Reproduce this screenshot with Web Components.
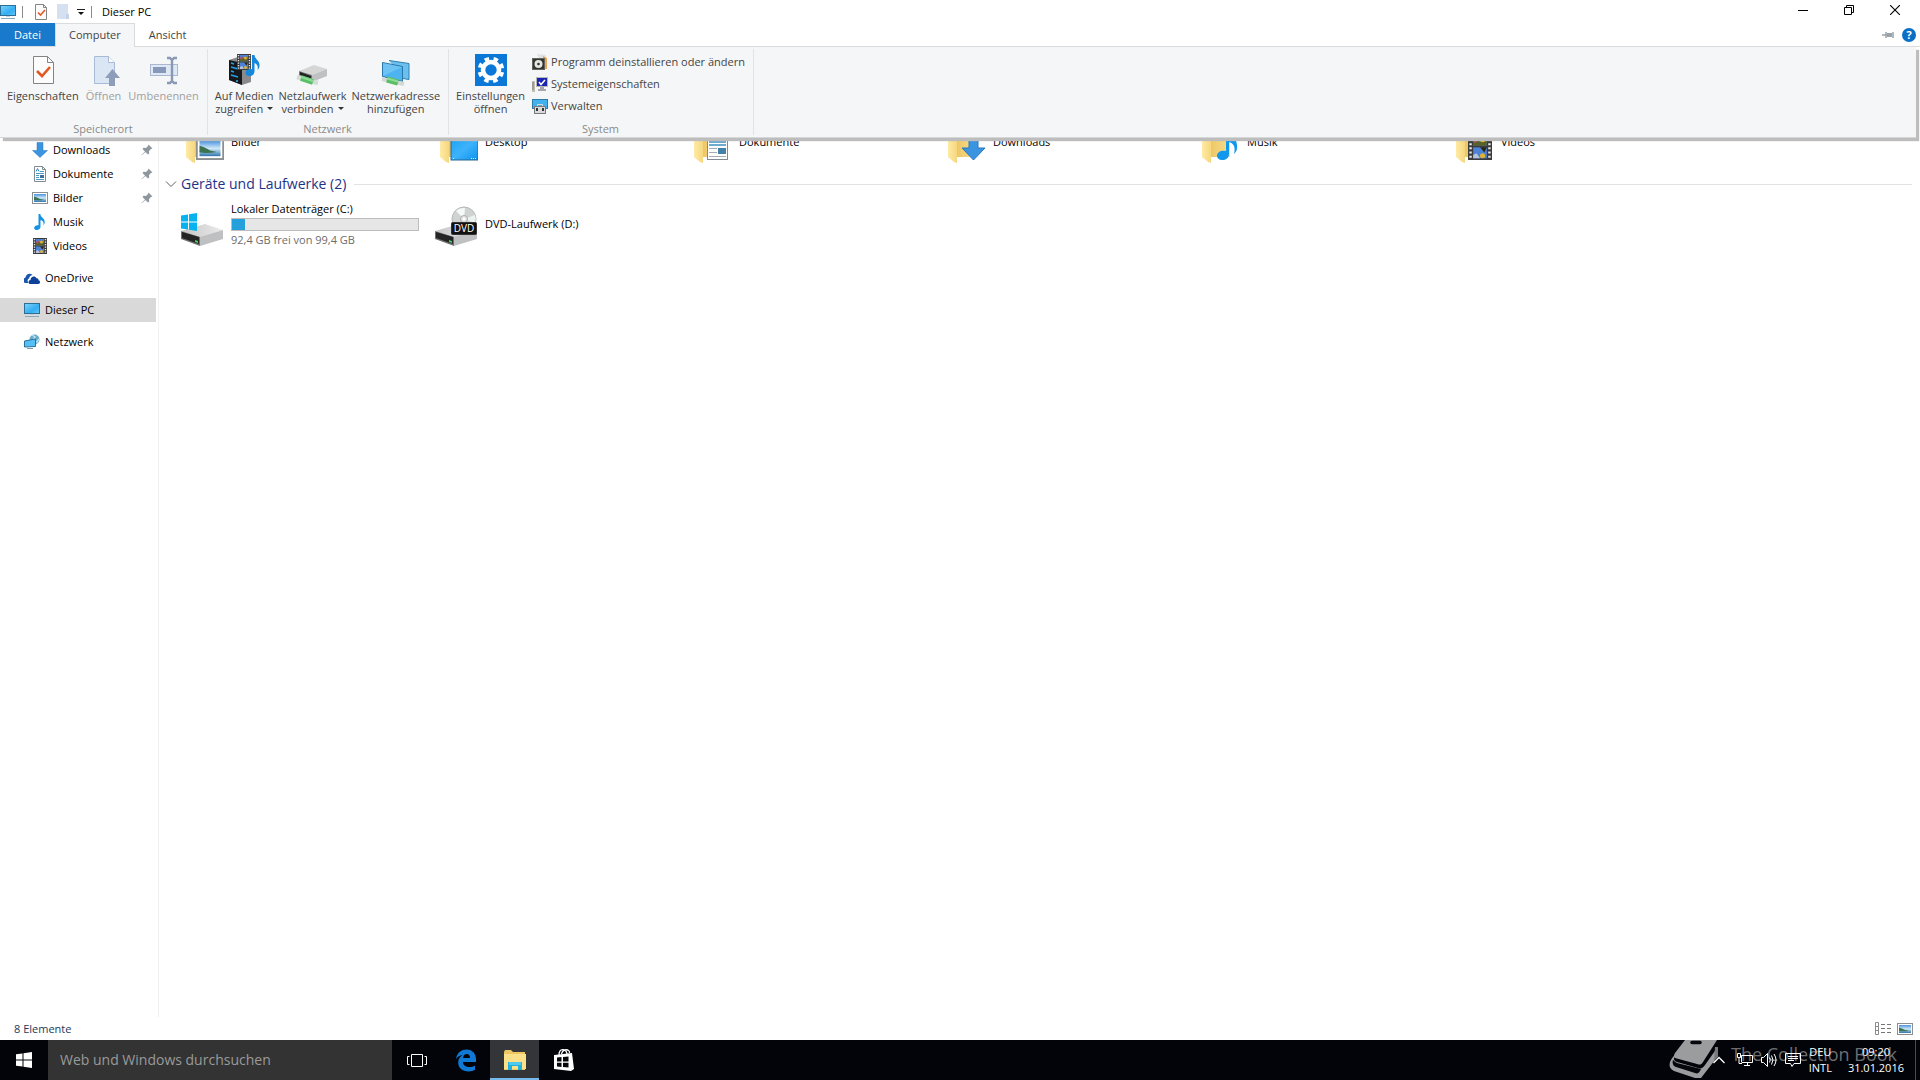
<!DOCTYPE html>
<html lang="de">
<head>
<meta charset="utf-8">
<title>Dieser PC</title>
<style>
    html, body {
        margin: 0;
        height: 100%;
    }
    body {
        font: 11px/16px "Open Sans", "Noto Sans", sans-serif;
        color: #000;
        background: #fff;
        overflow: hidden;
    }
</style>
</head>
<body>
<desktop-shell></desktop-shell>

<script>
// ---- icon artwork -------------------------------------------------------
// Small parts (16x16 units) that are drawn alone or placed on a folder.
const parts = {
    monitor: `
        <linearGradient id="scr" x1="0" y1="0" x2="1" y2="1"><stop offset="0" stop-color="#7fd4fb"/><stop offset=".6" stop-color="#35aef2"/><stop offset="1" stop-color="#63c6fa"/></linearGradient>
        <rect x=".5" y="1.5" width="15" height="10" fill="url(#scr)" stroke="#2b6f97"/>
        <path d="M1 14.5h14" stroke="#8ea9bb"/><path d="M6 12.5h4" stroke="#c3d4df"/>`,
    picture: `
        <linearGradient id="sky" x1="0" y1="0" x2="0" y2="1"><stop offset="0" stop-color="#4c93de"/><stop offset=".5" stop-color="#cfe8f8"/><stop offset="1" stop-color="#2f74ad"/></linearGradient>
        <rect x=".5" y="2.5" width="15" height="11" fill="#fff" stroke="#8c8f92"/>
        <rect x="2" y="4" width="12" height="8" fill="url(#sky)"/>
        <path d="M2 6.500q4 1 6 2.500l4 .8q-6 .9-10 .2z" fill="#3b7350"/>`,
    music: `<path d="M6.500 0h1.800c.3 3.500 4.700 4.200 4.400 8.200-.1 1.400-.6 2.300-1.300 3.200.7-3.200-.5-4.600-2.900-5.400v6.700c0 1.900-1.600 3.300-3.600 3.300-1.600 0-2.700-.8-2.700-2.100 0-1.800 1.900-3.100 4.300-2.700z" fill="#1493e6"/>`,
    film: `
        <rect x="1" width="14" height="16" fill="#3b3b3b"/>
        <path d="M2.500 1v15M13.500 1v15" stroke="#e9e9e9" stroke-width="1.400" stroke-dasharray="1.200 1.300"/>
        <rect x="4" y="1" width="8" height="6.500" fill="#4c82d8"/><rect x="4" y="8.500" width="8" height="6.500" fill="#4c82d8"/>
        <path d="M4 5l2-2 2 2 2-3 2 3v2.500H4z" fill="#59602a"/><path d="M4 4l2-2 1 2-2 2z" fill="#b74b6b"/>
        <circle cx="9.500" cy="4" r="1.500" fill="#e3b32a"/><path d="M8 8.500h4l-1.500 3z" fill="#2f2414"/>
        <circle cx="9.500" cy="13.500" r="1.500" fill="#e3b32a"/><path d="M4 13l2-1 2 3H4z" fill="#b6c4dd"/>`,
    download: `<path d="M5 .5h6v8h4.500L8 15.500.5 8.500H5z" fill="#3b94e0" stroke="#2a77bd" stroke-width=".5"/>`,
    document: `
        <path d="M2.500.5h8l3 3v12h-11z" fill="#fff" stroke="#7f8a92"/><path d="M10.500.5v3h3" fill="none" stroke="#7f8a92"/>
        <path d="M4 5.500l1.500-3 1.500 3" fill="none" stroke="#2c8bc9"/><path d="M8 5.500h4M4 7.500h8M4 9.500h3M4 11.500h3M4 13.500h8" stroke="#4b9dc8"/>
        <rect x="8" y="9" width="4" height="3" fill="#38729d"/>`
};

const folder = art => `
    <linearGradient id="fb"><stop offset="0" stop-color="#edc663"/><stop offset="1" stop-color="#f9df8f"/></linearGradient>
    <linearGradient id="ff"><stop offset="0" stop-color="#ffeaa5"/><stop offset="1" stop-color="#f6d77e"/></linearGradient>
    <path d="M18 10h20v29H18z" fill="url(#fb)"/><path d="M10 8l9 4v33l-3-1-6-5z" fill="url(#ff)"/>${art}`;

const place = (part, x, y, w, h, box) =>
    `<svg x="${x}" y="${y}" width="${w}" height="${h}" viewBox="${box}" preserveAspectRatio="none">${parts[part]}</svg>`;

const drive = `
    <linearGradient id="dt" x1="0" x2="1"><stop offset="0" stop-color="#c4c4c4"/><stop offset="1" stop-color="#ececec"/></linearGradient>
    <path d="M5 31l24-7 18 6-23 8z" fill="url(#dt)"/>
    <path d="M24 37l23-7v9L24 46z" fill="#bfc0c1"/>
    <path d="M5 31l19 6v9L5 39z" fill="#707070"/><path d="M6 32l17 5v7L6 38z" fill="#242424"/>
    <path d="M19 40l3 1v2l-3-1z" fill="#44d05d"/>`;

const icons = {
    monitor: [16, parts.monitor],
    picture: [16, parts.picture],
    music: [16, parts.music],
    film: [16, parts.film],
    download: [16, parts.download],
    document: [16, parts.document],
    check: [16, `<path d="M2.500.5h8l3 3v12h-11z" fill="#fbfbfb" stroke="#858585"/><path d="M10.500.5v3h3" fill="none" stroke="#858585"/><path d="M5 8.500l2.500 2.500 4.500-5" fill="none" stroke="#e4572a" stroke-width="1.600"/>`],
    blank: [16, `<path d="M2 0h11v15H2z" fill="#d5e0f1"/><path d="M11 10h3v5h-3z" fill="#c5d2e8"/>`],
    qatArrow: [8, `<path d="M0 1.500h8" stroke="#222"/><path d="M1 4h6L4 7z" fill="#111"/>`],
    onedrive: [16, `<path d="M1 13a3 3 0 0 1 .5-5.500C2 4 6 2.500 8.500 5 6 5.500 5.500 7 5.200 8.300 3.500 9 3 11.500 4.500 13z" fill="#1a56ad"/><path d="M6.500 14C3.800 14 4 10.300 6.500 10 6.500 6.500 11 5.200 12.500 8.300c1.500-.2 2 .8 2 2 2.200.4 1.900 3.700-.3 3.700z" fill="#0c419a"/>`],
    network: [16, `<circle cx="10.500" cy="5.500" r="5" fill="#6aa8c9"/><path d="M8 1l3 2-2 3 4 2 2-3" fill="none" stroke="#b9e2ef" stroke-width="1.500"/><path d="M.5 7l11-2v7.500l-11 .5z" fill="#55c0f5" stroke="#2a719a"/><path d="M3 14.500h6" stroke="#7d99aa"/>`],
    pin: [12, `<path d="M7.500.5l4 4-1.500.5-2 2 .2 2.500-1.200 1L4.500 8 .8 11.300.5 11 4 7.500 1.500 5l1-1.200L5 4l2-2z" fill="#8f979e"/>`],
    pinSide: [12, `<path d="M0 6h4M4 3v6M4 6h6M11 3v6" stroke="#99a3ab" stroke-width="1.500"/><path d="M5 4h5v4H5z" fill="#99a3ab"/>`],
    help: [14, `<circle cx="7" cy="7" r="7" fill="#0b6fc6"/><text x="7" y="11" font-size="11" font-weight="700" text-anchor="middle" fill="#fff">?</text>`],
    minimize: [10, `<path d="M0 5.500h10" stroke="#000"/>`],
    restore: [10, `<path d="M.5 2.500h7v7h-7zM2.500 2.500v-2h7v7h-2" fill="none" stroke="#000"/>`],
    close: [10, `<path d="M0 0l10 10M10 0L0 10" stroke="#000" stroke-width="1.100"/>`],
    chevron: [12, `<path d="M1 3.500l5 5 5-5" fill="none" stroke="#616161"/>`],

    properties: [32, `<path d="M6.500 2.500h14l6 6v21h-20z" fill="#fcfcfc" stroke="#838383"/><path d="M20.500 2.500v6h6" fill="none" stroke="#838383"/><path d="M10 17l5 5 8-9" fill="none" stroke="#e25822" stroke-width="2.600"/>`],
    open: [32, `<path d="M6.500 2.500h14l6 6v21h-20z" fill="#dbe6f5" stroke="#a9bad6"/><path d="M20.500 2.500v6h6" fill="#fff" stroke="#a9bad6"/><path d="M24.500 15l7.500 9h-5v8h-6v-8h-4z" fill="#8d9dba"/>`],
    rename: [32, `<rect x="2.500" y="10.500" width="27" height="11" fill="#dfe8f5" stroke="#aab8d1"/><rect x="5" y="13" width="13" height="6" fill="#8798b8"/><path d="M19 4h3l2 2 2-2h3M24 6v21M19 29h3l2-2 2 2h3" fill="none" stroke="#8998b3" stroke-width="2.400"/>`],
    media: [32, `<path d="M1 6l9-3 13 4v21l-9 3-13-5z" fill="#8b8b8d"/><path d="M1 6l13 3v22L1 26z" fill="#17181b"/><path d="M3 9l3 1M3 13l7 2M3 17l3 1M3 21l7 2M9 13l2 1" stroke="#22a2ea" stroke-width="1.500"/><circle cx="9" cy="27" r="1" fill="#3ab4f5"/>${place("film", 8, 0, 16, 16, "0 0 16 16")}<path d="M24 1h2.500c.5 5 5.500 5 5 11-.2 2-1 3-2 4 1-4-.5-6-3-7v8c0 3-2 5-5 5-2.500 0-4-1.200-4-3 0-2.600 3-4.500 6.500-3.700z" fill="#1688db"/>`],
    netdrive: [32, `<path d="M3 17L18 11l13 4-15 6z" fill="#d6d6d6"/><path d="M16 21l15-6v7l-15 6z" fill="#bfc0c1"/><path d="M3 17l13 4v6L3 23z" fill="#77797a"/><path d="M4 18l11 4v3L4 21z" fill="#222"/><path d="M1 23l21 6" stroke="#d6dcd7" stroke-width="4.500"/><path d="M5 24l12 4" stroke="#59be67" stroke-width="6"/><path d="M5 23l12 4" stroke="#8ddc95" stroke-width="2"/>`],
    netaddress: [32, `<path d="M9 6.500l20 3v16l-6-1" fill="#6cc0ef" stroke="#2e7fae"/><path d="M2.500 8.500l20 4v15l-20-5z" fill="#4db3f1" stroke="#2a76a4"/><path d="M3 22V9l19 4z" fill="#84cef7" opacity=".6"/><path d="M2 25l22 5" stroke="#d2d8d3" stroke-width="4"/><path d="M7 25.500l11 3" stroke="#59be67" stroke-width="6"/><path d="M7 24.500l11 3" stroke="#8ddc95" stroke-width="2"/>`],
    settings: [32, `<rect width="32" height="32" fill="#0b78d7"/><circle cx="16" cy="16" r="8" fill="none" stroke="#fff" stroke-width="4.600"/><circle cx="16" cy="16" r="11.300" fill="none" stroke="#fff" stroke-width="4" stroke-dasharray="4.440 4.440" transform="rotate(11 16 16)"/>`],
    uninstall: [16, `<path d="M5 0l9 1v11l-5-1z" fill="#dfe3e6"/><path d="M11 2l4 2v11h-4z" fill="#e8a659"/><rect x=".5" y="4.500" width="12" height="11" fill="#33352f" stroke="#62645d"/><circle cx="6.500" cy="10" r="4" fill="#e6e6e6"/><circle cx="6.500" cy="10" r="1.300" fill="#30322d"/>`],
    system: [16, `<path d="M0 5h3v11H0z" fill="#c1c0b4"/><path d="M1 6v8" stroke="#7d7c70"/><rect x="4.500" y="1.500" width="11" height="9" fill="#1b25b0" stroke="#b7b7b9"/><path d="M7 6l2 2.500L13 4" fill="none" stroke="#fff" stroke-width="1.500"/><path d="M8 11h4v2h2v2H6v-2h2z" fill="#a6a6aa"/>`],
    manage: [16, `<rect x=".5" y="1.500" width="15" height="9" fill="#42b2ee" stroke="#2b7aa8"/><path d="M5.500 8V6.500h5V8" fill="none" stroke="#d8d8d8"/><rect x="2.500" y="8.500" width="11" height="7" fill="#d9dadb" stroke="#77797b"/><path d="M5 10v3M11 10v3" stroke="#333" stroke-width="2"/>`],

    folderPictures: [48, folder(place("picture", 20, 19, 28, 23, "0 2 16 12"))],
    folderDesktop: [48, folder(`<linearGradient id="dk" x1="0" y1="0" x2="1" y2="1"><stop offset="0" stop-color="#1aa3f6"/><stop offset=".5" stop-color="#3eb2fa"/><stop offset="1" stop-color="#0b93ee"/></linearGradient><rect x="21" y="20" width="27" height="22" fill="url(#dk)" stroke="#26668f"/><path d="M23 40.500h1M41 40.500h5" stroke="#d9f0ff" stroke-dasharray="1 1"/>`)],
    folderDocuments: [48, folder(`<rect x="23.500" y="14.500" width="20" height="27" fill="#fff" stroke="#7f8a92"/><path d="M25 24h17M25 27h17" stroke="#3f91bf" stroke-width="1.400"/><path d="M25 30.500h8M25 34.500h8M25 38.500h17" stroke="#a5adb3"/><rect x="34" y="30" width="8" height="6" fill="#4381a9"/>`)],
    folderDownloads: [48, folder(`<path d="M31 12h9v18h7L35.500 42 24 30h7z" fill="#3b94e0" stroke="#2a77bd"/>`)],
    folderMusic: [48, folder(`<path d="M34 12h3c1 6 9 8 8 18 0 2-1 4-3 6 2-8-1-11-5-12v12c0 4-3 6-7 6-3 0-5-2-5-4 0-4 4-6 9-5z" fill="#1197ec"/>`)],
    folderVideos: [48, folder(place("film", 22, 15, 24, 27, "1 0 14 16"))],
    driveC: [48, drive + `<path d="M5 15.500l7-1v7H5zM13 14.300l8-1.300v8.500h-8zM5 22.500h7v7l-7-1zM13 22.500h8V31l-8-1.300z" fill="#06b3ee"/>`],
    driveDvd: [48, drive + `<circle cx="34" cy="19" r="12" fill="#cfd4d3" stroke="#b4b9b8"/><path d="M34 19l-8-8a11 11 0 0 1 9-3z" fill="#f5f9f7"/><path d="M34 19l11 4a12 12 0 0 0 0-8z" fill="#eaf3ee"/><circle cx="34" cy="19" r="3.500" fill="#e8e8e8" stroke="#aaa"/><circle cx="34" cy="19" r="1.200" fill="#fff"/><rect x="21.500" y="22.500" width="25" height="12" rx="1" fill="#111" stroke="#333"/><text x="34" y="32" font-size="10" text-anchor="middle" fill="#fff">DVD</text>`],

    viewDetails: [16, `<path d="M.5 1.500h3v12h-3zM.5 5.500h3M.5 9.500h3" fill="none" stroke="#8b8b8b"/><path d="M6 3.500h4M6 7.500h4M6 11.500h4M12 3.500h4M12 7.500h4M12 11.500h4" stroke="#757575"/>`],
    start: [16, `<path d="M0 2.300L6.500 1.400V7.500H0zM7.500 1.200L16 0v7.500H7.500zM0 8.500h6.500v6.100L0 13.700zM7.500 8.500H16V16l-8.500-1.200z" fill="#fff"/>`],
    taskview: [20, `<path d="M4.500 4.500h11v12h-11zM2.500 6.500h-2v8h2M17.500 6.500h2v8h-2" fill="none" stroke="#fff"/>`],
    edge: [24, `<path d="M2 11C3 4.500 7.500 1.500 12.500 1.500c6 0 9.500 4.500 9.500 9.500v3H9c0 3.500 3 5 6.300 5 2.200 0 4.200-.6 5.700-1.600v4.400c-1.700 1-4 1.700-6.700 1.700C8.500 23.500 4.200 20 4.200 14.500 4.200 11 6 8.500 8.700 7 5.500 7.500 3.300 9 2 11zm7-1h7c0-2.700-1.200-4-3.300-4C10.700 6 9.400 7.500 9 10z" fill="#0f79d4"/>`],
    explorer: [24, `<path d="M1 4l1-2h6l2 2h12v18H1z" fill="#edc75f"/><path d="M1 6h22v15H1z" fill="#fbe08a"/><path d="M5 22v-8h14v8h-4v-4H9v4z" fill="#24b0de"/><path d="M6 14h12v3H6z" fill="#4ecbec"/>`],
    store: [24, `<path d="M7 7C7 0 14 0 15 6M9.500 6C11 0 18 1 17.500 5" fill="none" stroke="#fff" stroke-width="1.300"/><path d="M2 7l18-2 2 16-3 2-17-2z" fill="#fff"/><path d="M5 9.500l4.500-.4v4.300H5zM11 9l5.500-.6v5H11zM5 14.700h4.500v4.200L5 18.500zM11 14.700h5.500v4.900L11 19z" fill="#05070c"/>`],
    trayUp: [12, `<path d="M.5 9L6 3.500 11.500 9" fill="none" stroke="#fff" stroke-width="1.300"/>`],
    trayNet: [16, `<path d="M4.500 3.500h11v7h-11zM10.500 10.500v3M7 13.500h6" fill="none" stroke="#fff"/><path d="M.5 1.500h3v4h-3zM2 6v5.500h3" fill="#05070c" stroke="#fff"/>`],
    trayVolume: [16, `<path d="M.5 5.500h2l4-4v13l-4-4h-2z" fill="none" stroke="#fff"/><path d="M8.500 5.500q1.500 2.500 0 5M10.500 3.500q3 4.500 0 9M13 2q4 6 0 12" fill="none" stroke="#fff"/>`],
    trayAction: [16, `<path d="M.5 1.500h15v10H9L7 14.500 5.500 11.500h-5zM3 4.500h10M3 6.500h10M3 8.500h6" fill="none" stroke="#fff"/>`],
    book: [52, `<path d="M16 0h32L34 22c-2 3-3 3-6 2L6 18c-2-1-1-3 0-5z" fill="#9b9c9e"/><path d="M23 2.500h8" stroke="#05070c" stroke-width="3.500" stroke-linecap="round"/><path d="M6 15c-2 4-1 6 2 7l21 6c3 1 5 0 7-3L48 8l-2 12-14 18H26L5 31C-2 28 0 20 6 15z" fill="#9b9c9e"/><path d="M4 20c-1 3 0 6 3 7l19 6c2 1 4 0 5-2l1-2-24-6c-2-1-3-2-4-3z" fill="#05070c"/><path d="M46 7h3v10l-4 4z" fill="#77787a"/>`]
};

// Base class: gives every element an open shadow root filled from a template.
class ShellElement extends HTMLElement {
    constructor() {
        super();
        this.attachShadow({ mode: 'open' });
        const template = document.createElement('template');
        template.innerHTML = this.render();
        this.shadowRoot.appendChild(template.content.cloneNode(true));
    }
}

class ShellIcon extends HTMLElement {
    static observedAttributes = ['name'];

    constructor() {
        super();
        this.attachShadow({ mode: 'open' });
    }

    attributeChangedCallback(attribute, oldName, name) {
        const [size, art] = icons[name];
        this.shadowRoot.innerHTML = `
            <style>
                :host { display: block; flex: none; width: ${size}px; height: ${size}px; }
                .icon { display: block; width: 100%; height: 100%; }
            </style>
            <svg class="icon" viewBox="0 0 ${size} ${size}" aria-hidden="true">${art}</svg>`;
    }
}

class TitleBar extends ShellElement {
    render() {
        return `
            <style>
                :host { display: flex; align-items: flex-start; height: 23px; padding-right: 2px; }
                button { border: 0; background: none; padding: 0; color: inherit; }
                .quick { display: flex; align-items: center; flex: 1; gap: 6px; height: 23px; }
                .line { width: 1px; height: 12px; margin-right: 4px; background: #8b8b8b; }
                .window { width: 46px; height: 20px; display: grid; place-items: center; }
                h1 { font: inherit; margin: 0; }
            </style>
            <div class="quick">
                <shell-icon name="monitor"></shell-icon>
                <span class="line"></span>
                <button aria-label="Eigenschaften"><shell-icon name="check"></shell-icon></button>
                <button aria-label="Neuer Ordner"><shell-icon name="blank"></shell-icon></button>
                <button aria-label="Symbolleiste anpassen"><shell-icon name="qatArrow"></shell-icon></button>
                <span class="line"></span>
                <h1>Dieser PC</h1>
            </div>
            <button class="window" aria-label="Minimieren"><shell-icon name="minimize"></shell-icon></button>
            <button class="window" aria-label="Verkleinern"><shell-icon name="restore"></shell-icon></button>
            <button class="window" aria-label="Schließen"><shell-icon name="close"></shell-icon></button>
        `;
    }
}

class RibbonTabs extends ShellElement {
    render() {
        return `
            <style>
                :host { display: flex; height: 23px; border-bottom: 1px solid #dadbdc; }
                button { font: inherit; color: #444; border: 0; background: none; padding: 0 14px; margin: 0; }
                .file { background: #1979ca; color: #fff; }
                .active { box-sizing: border-box; background: #f5f6f7; border: 1px solid #dadbdc; border-bottom: 0; height: 24px; padding: 0 13px 2px; }
                .tools { margin-left: auto; display: flex; align-items: center; gap: 8px; padding-right: 4px; }
                .tools button { padding: 0; }
            </style>
            <button class="file">Datei</button>
            <button class="active">Computer</button>
            <button>Ansicht</button>
            <div class="tools">
                <button aria-label="Menüband anheften"><shell-icon name="pinSide"></shell-icon></button>
                <button aria-label="Hilfe"><shell-icon name="help"></shell-icon></button>
            </div>
        `;
    }
}

class RibbonGroup extends ShellElement {
    render() {
        return `
            <style>
                :host { display: flex; flex-direction: column; padding: 5px 8px 0 7px; border-right: 1px solid #e2e3e4; }
                .tools { display: flex; gap: 7px; flex: 1; }
                :host([dense]) .tools { gap: 5px; }
                .name { text-align: center; color: #8a8a8a; line-height: 13px; margin-top: 7px; }
            </style>
            <div class="tools"><slot></slot></div>
            <div class="name"></div>
        `;
    }

    connectedCallback() {
        this.shadowRoot.querySelector('.name').textContent = this.getAttribute('name');
    }
}

class RibbonButton extends ShellElement {
    render() {
        return `
            <style>
                :host { display: block; }
                button { display: flex; flex-direction: column; align-items: center; gap: 3px; font: inherit; line-height: 13px; color: #444; background: none; border: 0; padding: 0; }
                .label { text-align: center; min-height: 26px; white-space: nowrap; }
                :host([disabled]) button { color: #a0a0a0; }
                :host([small]) button { flex-direction: row; align-items: flex-start; height: 16px; line-height: 15px; }
                :host([small]) .label { min-height: 0; }
                :host([menu]) .label::after { content: ""; display: inline-block; margin-left: 4px; vertical-align: 3px; border: 3px solid transparent; border-top-color: #333; border-bottom: 0; }
            </style>
            <button><shell-icon></shell-icon><span class="label"><slot></slot></span></button>
        `;
    }

    connectedCallback() {
        this.shadowRoot.querySelector('shell-icon').setAttribute('name', this.getAttribute('icon'));
        this.shadowRoot.querySelector('button').disabled = this.hasAttribute('disabled');
    }
}

class RibbonPanel extends ShellElement {
    render() {
        return `
            <style>
                :host { display: flex; box-sizing: border-box; padding: 2px 0; background: #f5f6f7; border-bottom: 1px solid #d5d6d7; box-shadow: 3px 3px 1px #bdbdbd; }
                .stack { display: flex; flex-direction: column; gap: 6px; }
            </style>
            <ribbon-group name="Speicherort">
                <ribbon-button icon="properties">Eigenschaften</ribbon-button>
                <ribbon-button icon="open" disabled>Öffnen</ribbon-button>
                <ribbon-button icon="rename" disabled>Umbenennen</ribbon-button>
            </ribbon-group>
            <ribbon-group name="Netzwerk" dense>
                <ribbon-button icon="media" menu>Auf Medien<br>zugreifen</ribbon-button>
                <ribbon-button icon="netdrive" menu>Netzlaufwerk<br>verbinden</ribbon-button>
                <ribbon-button icon="netaddress">Netzwerkadresse<br>hinzufügen</ribbon-button>
            </ribbon-group>
            <ribbon-group name="System">
                <ribbon-button icon="settings">Einstellungen<br>öffnen</ribbon-button>
                <div class="stack">
                    <ribbon-button small icon="uninstall">Programm deinstallieren oder ändern</ribbon-button>
                    <ribbon-button small icon="system">Systemeigenschaften</ribbon-button>
                    <ribbon-button small icon="manage">Verwalten</ribbon-button>
                </div>
            </ribbon-group>
        `;
    }
}

class NavPane extends ShellElement {
    render() {
        const item = (icon, label, kind = '', pinned = false) => `
            <a href="#" class="${kind}"><shell-icon name="${icon}"></shell-icon><span>${label}</span>${pinned ? '<shell-icon name="pin"></shell-icon>' : ''}</a>`;
        return `
            <style>
                :host { display: block; padding-top: 91px; padding-right: 2px; border-right: 1px solid #f0f0f0; }
                a { display: flex; align-items: center; gap: 5px; height: 24px; padding: 0 3px 0 32px; color: inherit; text-decoration: none; }
                span { flex: 1; }
                .root { padding-left: 24px; margin-top: 8px; }
                .selected { background: #d9d9d9; }
            </style>
            ${item('download', 'Downloads', '', true)}
            ${item('document', 'Dokumente', '', true)}
            ${item('picture', 'Bilder', '', true)}
            ${item('music', 'Musik')}
            ${item('film', 'Videos')}
            ${item('onedrive', 'OneDrive', 'root')}
            ${item('monitor', 'Dieser PC', 'root selected')}
            ${item('network', 'Netzwerk', 'root')}
        `;
    }
}

class FileTile extends ShellElement {
    render() {
        return `
            <style>
                :host { display: block; }
                button { display: flex; align-items: center; gap: 7px; width: 100%; height: 48px; padding: 0; border: 0; background: none; font: inherit; color: inherit; text-align: left; }
            </style>
            <button><shell-icon></shell-icon><span><slot></slot></span></button>
        `;
    }

    connectedCallback() {
        this.shadowRoot.querySelector('shell-icon').setAttribute('name', this.getAttribute('icon'));
    }
}

class FileView extends ShellElement {
    render() {
        return `
            <style>
                :host { display: block; padding: 71px 8px 0 6px; }
                .tiles { display: grid; grid-template-columns: repeat(auto-fill, 254px); padding-left: 11px; }
                header { display: flex; align-items: center; gap: 4px; margin: 8px 0 6px; }
                h2 { font-size: 14px; line-height: 20px; font-weight: 400; margin: 0; color: #1e3287; }
                hr { flex: 1; border: 0; border-top: 1px solid #e2e2e2; margin: 0 0 0 4px; }
                progress { display: block; appearance: none; box-sizing: border-box; width: 188px; height: 13px; margin: 1px 0; border: 1px solid #bcbcbc; }
                progress::-webkit-progress-bar { background: #e6e6e6; }
                progress::-webkit-progress-value { background: #26a0da; }
                small { display: block; font-size: 11px; color: #6d6d6d; }
            </style>
            <div class="tiles">
                <file-tile icon="folderPictures">Bilder</file-tile>
                <file-tile icon="folderDesktop">Desktop</file-tile>
                <file-tile icon="folderDocuments">Dokumente</file-tile>
                <file-tile icon="folderDownloads">Downloads</file-tile>
                <file-tile icon="folderMusic">Musik</file-tile>
                <file-tile icon="folderVideos">Videos</file-tile>
            </div>
            <header>
                <shell-icon name="chevron"></shell-icon>
                <h2>Geräte und Laufwerke (2)</h2>
                <hr>
            </header>
            <div class="tiles">
                <file-tile icon="driveC">Lokaler Datenträger (C:)<progress value="7" max="99" aria-label="Belegter Speicher"></progress><small>92,4 GB frei von 99,4 GB</small></file-tile>
                <file-tile icon="driveDvd">DVD-Laufwerk (D:)</file-tile>
            </div>
        `;
    }
}

class StatusBar extends ShellElement {
    render() {
        return `
            <style>
                :host { display: flex; align-items: center; gap: 6px; height: 23px; padding: 0 7px 0 14px; color: #1e395b; }
                .count { flex: 1; }
                button { border: 0; background: none; padding: 0; }
            </style>
            <span class="count">8 Elemente</span>
            <button aria-label="Details"><shell-icon name="viewDetails"></shell-icon></button>
            <button aria-label="Große Symbole"><shell-icon name="picture"></shell-icon></button>
        `;
    }
}

class ExplorerWindow extends ShellElement {
    render() {
        return `
            <style>
                :host { display: flex; flex-direction: column; }
                main { position: relative; flex: 1; display: grid; grid-template-columns: 159px 1fr; }
                /* the ribbon is minimised, so it drops down over the files */
                ribbon-panel { position: absolute; top: 0; left: 0; right: 4px; z-index: 1; }
            </style>
            <title-bar></title-bar>
            <ribbon-tabs></ribbon-tabs>
            <main>
                <ribbon-panel></ribbon-panel>
                <nav-pane></nav-pane>
                <file-view></file-view>
            </main>
            <status-bar></status-bar>
        `;
    }
}

class TaskBar extends ShellElement {
    render() {
        return `
            <style>
                :host { position: relative; display: flex; height: 40px; background: #020409; color: #fff; }
                button { border: 0; background: none; padding: 0; color: inherit; font: inherit; }
                .app { display: grid; place-items: center; width: 49px; }
                .start { width: 48px; }
                .open { background: #343538; box-shadow: inset 0 -2px #76b9ed; }
                input { width: 344px; box-sizing: border-box; border: 0; padding: 0 12px; background: #333; color: #fff; font: inherit; font-size: 14px; }
                input::placeholder { color: #9a9a9a; }
                .tray { display: flex; align-items: center; gap: 8px; margin-left: auto; position: relative; }
                .more { margin-right: 4px; }
                .clock { padding: 0 11px 0 8px; }
                .peek { border-left: 1px solid #4b4c50; width: 4px; }
                .mark { position: absolute; right: 23px; top: 0; display: flex; gap: 10px; color: #6d6e71; font-size: 18px; line-height: 28px; }
            </style>
            <button class="app start" aria-label="Start"><shell-icon name="start"></shell-icon></button>
            <input type="text" placeholder="Web und Windows durchsuchen" aria-label="Web und Windows durchsuchen">
            <button class="app" aria-label="Taskansicht"><shell-icon name="taskview"></shell-icon></button>
            <button class="app" aria-label="Microsoft Edge"><shell-icon name="edge"></shell-icon></button>
            <button class="app open" aria-label="Explorer"><shell-icon name="explorer"></shell-icon></button>
            <button class="app" aria-label="Store"><shell-icon name="store"></shell-icon></button>
            <div class="mark"><shell-icon name="book"></shell-icon><span>The Collection Book</span></div>
            <div class="tray">
                <button class="more" aria-label="Ausgeblendete Symbole"><shell-icon name="trayUp"></shell-icon></button>
                <button aria-label="Netzwerk"><shell-icon name="trayNet"></shell-icon></button>
                <button aria-label="Lautstärke"><shell-icon name="trayVolume"></shell-icon></button>
                <button aria-label="Benachrichtigungen"><shell-icon name="trayAction"></shell-icon></button>
                <button>DEU<br>INTL</button>
                <button class="clock">09:20<br>31.01.2016</button>
            </div>
            <span class="peek"></span>
        `;
    }
}

class DesktopShell extends ShellElement {
    render() {
        return `
            <style>
                :host { display: flex; flex-direction: column; height: 100vh; }
                explorer-window { flex: 1; }
            </style>
            <explorer-window></explorer-window>
            <task-bar></task-bar>
        `;
    }
}

customElements.define('shell-icon', ShellIcon);
customElements.define('title-bar', TitleBar);
customElements.define('ribbon-tabs', RibbonTabs);
customElements.define('ribbon-group', RibbonGroup);
customElements.define('ribbon-button', RibbonButton);
customElements.define('ribbon-panel', RibbonPanel);
customElements.define('nav-pane', NavPane);
customElements.define('file-tile', FileTile);
customElements.define('file-view', FileView);
customElements.define('status-bar', StatusBar);
customElements.define('explorer-window', ExplorerWindow);
customElements.define('task-bar', TaskBar);
customElements.define('desktop-shell', DesktopShell);
</script>
</body>
</html>
